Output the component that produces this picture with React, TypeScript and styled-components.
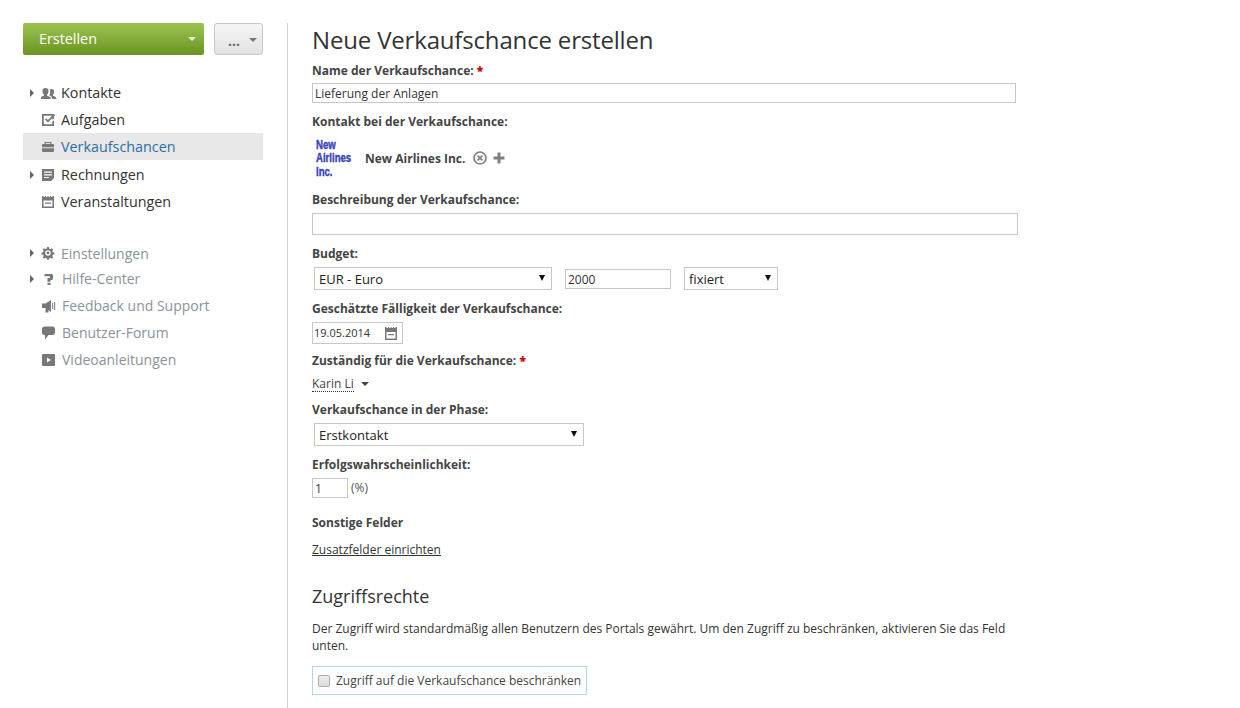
import React, { ReactNode } from "react"
import styled, { createGlobalStyle } from "styled-components"

const GlobalStyle = createGlobalStyle`
  html, body {
    margin: 0;
    padding: 0;
    background: #fff;
  }
  body {
    font-family: "Open Sans", "Liberation Sans", sans-serif;
    font-size: 12px;
    color: #333;
  }
`

const Page = styled.div`
  display: flex;
  width: 1240px;
  height: 708px;
  padding: 23px 0 0 23px;
  box-sizing: border-box;
  overflow: hidden;
`

const Sidebar = styled.aside`
  width: 240px;
  flex: none;
  margin-right: 24px;
`

const ButtonRow = styled.div`
  display: flex;
  gap: 10px;
  margin-bottom: 24px;
`

const CreateButton = styled.div`
  position: relative;
  width: 181px;
  height: 32px;
  box-sizing: border-box;
  padding-left: 16px;
  border-radius: 2px;
  background: linear-gradient(#9cc452, #6b9321);
  color: #fff;
  font-size: 14.35px;
  line-height: 31px;

  &::after {
    content: "";
    position: absolute;
    right: 8px;
    top: 14px;
    border: 4px solid transparent;
    border-top-color: #e8f2d4;
    border-bottom: 0;
  }
`

const MoreButton = styled.div`
  position: relative;
  width: 49px;
  height: 32px;
  box-sizing: border-box;
  padding-left: 13px;
  border: 1px solid #c8c8c8;
  border-radius: 3px;
  background: linear-gradient(#f6f6f6, #e2e2e2);
  color: #666;
  font-size: 14px;
  font-weight: 700;
  line-height: 33px;

  &::after {
    content: "";
    position: absolute;
    right: 5px;
    top: 14px;
    border: 4px solid transparent;
    border-top-color: #777;
    border-bottom: 0;
  }
`

const NavGroup = styled.nav<{ $mt?: number }>`
  margin-top: ${p => p.$mt ?? 0}px;
`

const NavItem = styled.div<{ $active?: boolean; $muted?: boolean; $h?: number; $gap?: number }>`
  position: relative;
  display: flex;
  align-items: center;
  height: ${p => p.$h ?? 27}px;
  margin-bottom: ${p => (p.$active ? 1 : 0)}px;
  padding-left: 18px;
  font-size: ${p => (p.$muted ? 14 : 14.35)}px;
  background: ${p => (p.$active ? "#e8e8e8" : "transparent")};
  color: ${p => (p.$active ? "#2b6ea6" : p.$muted ? "#8b929b" : "#333")};

  svg.nav-icon {
    flex: none;
    width: 16px;
    height: 16px;
    margin-right: ${p => p.$gap ?? 4}px;
    fill: #787878;
  }
`

const Caret = styled.span`
  position: absolute;
  left: 7px;
  top: 50%;
  margin-top: -4px;
  border: 4px solid transparent;
  border-left: 4px solid #666;
  border-right: 0;
`

const Divider = styled.div`
  width: 1px;
  height: 685px;
  flex: none;
  background: #d1d1d1;
`

const Main = styled.main`
  flex: none;
  width: 728px;
  padding-left: 24px;
`

const Title = styled.h1`
  margin: 0;
  height: 39px;
  font-size: 24px;
  font-weight: 400;
  letter-spacing: -0.17px;
  line-height: 34px;
  color: #333;
`

const Label = styled.div<{ $mt?: number }>`
  margin-top: ${p => p.$mt ?? 0}px;
  height: 18px;
  font-size: 12px;
  font-weight: 700;
  line-height: 18px;
  color: #444;

  b {
    color: #c00;
  }
`

const Box = styled.div<{ $w: number; $h: number; $mt?: number; $ml?: number }>`
  position: relative;
  width: ${p => p.$w}px;
  height: ${p => p.$h}px;
  margin-top: ${p => p.$mt ?? 0}px;
  margin-left: ${p => p.$ml ?? 0}px;
  box-sizing: border-box;
  flex: none;
  padding-left: 2px;
  border: 1px solid #c7c7c7;
  background: #fff;
  font-size: 12px;
  line-height: 20px;
  color: #333;
`

const Select = styled(Box)`
  padding-left: 4px;
  font-size: 13px;
  line-height: 22px;
  color: #222;

  &::after {
    content: "";
    position: absolute;
    right: 6px;
    top: 7px;
    border: 3.5px solid transparent;
    border-top: 6px solid #111;
    border-bottom: 0;
  }
`

const DateBox = styled(Box)`
  padding-left: 1px;
  font-size: 11px;
`

const ContactRow = styled.div`
  display: flex;
  align-items: center;
  height: 40px;
  margin-top: 7px;
  padding-left: 4px;
`

const Logo = styled.div`
  width: 36px;
  margin-right: 13px;
  transform: translateY(1px) scaleX(0.8);
  transform-origin: left center;
  white-space: nowrap;
  color: #3a44b8;
  font-family: "Liberation Sans", sans-serif;
  font-size: 12px;
  font-weight: 700;
  line-height: 13.5px;
  -webkit-text-stroke: 0.4px #3a44b8;
`

const ContactName = styled.span`
  font-size: 12px;
  font-weight: 700;
  color: #444;
`

const ContactIcon = styled.svg<{ $ml: number }>`
  width: 14px;
  height: 14px;
  margin-top: -1px;
  margin-left: ${p => p.$ml}px;
`

const FieldRow = styled.div`
  display: flex;
  align-items: center;
  height: 23px;
  margin-top: 4px;
  padding-left: 2px;
`

const DateIcon = styled.svg`
  position: absolute;
  right: 5px;
  top: 4px;
  width: 12px;
  height: 13px;
  fill: #787878;
`

const OwnerRow = styled.div`
  display: flex;
  align-items: center;
  height: 18px;
  margin-top: 5px;
`

const Owner = styled.span`
  border-bottom: 1px dotted #333;
  font-size: 12px;
  line-height: 15px;
  color: #444;
`

const OwnerCaret = styled.span`
  width: 0;
  margin-left: 7px;
  border: 4px solid transparent;
  border-top-color: #444;
  border-bottom: 0;
`

const PercentRow = styled.div`
  display: flex;
  margin-top: 4px;
`

const PercentText = styled.span`
  margin-left: 3px;
  line-height: 20px;
  font-size: 12px;
  color: #555;
`

const SetupLink = styled.a`
  display: block;
  width: max-content;
  margin-top: 9px;
  font-size: 12px;
  line-height: 18px;
  color: #333;
  text-decoration: underline;
`

const SectionTitle = styled.h2`
  margin: 24px 0 0;
  height: 26px;
  font-size: 18px;
  font-weight: 400;
  line-height: 26px;
  color: #333;
`

const Notice = styled.p`
  margin: 11px 0 0;
  width: 720px;
  font-size: 12px;
  line-height: 17px;
  color: #333;
`

const RestrictBox = styled.label`
  display: flex;
  align-items: center;
  width: 275px;
  height: 29px;
  margin-top: 12px;
  box-sizing: border-box;
  padding-left: 5px;
  border: 1px solid #b5d5e8;
  font-size: 12px;
  color: #444;
`

const CheckBox = styled.span`
  width: 12px;
  height: 12px;
  margin-right: 6px;
  box-sizing: border-box;
  border: 1px solid #adadad;
  border-radius: 2px;
  background: linear-gradient(#ececec, #dcdcdc);
`

const icons: Record<string, ReactNode> = {
  contacts: (
    <g transform="translate(-1 1)">
      <path d="M5.500 2a3 3 0 0 1 3 3.200c0 1.500-.6 2.800-1.400 3.400v1.200c2.200.6 3.900 1.400 3.900 3.200H0c0-1.800 1.700-2.600 3.900-3.200V8.600C3.100 8 2.500 6.700 2.500 5.200a3 3 0 0 1 3-3.200zM11.500 3a2.600 2.600 0 0 1 2.600 2.800c0 1.300-.5 2.400-1.200 2.900v1c1.500.4 3.600 1.100 3.600 3.300h-4.200c-.2-1.700-1.300-2.800-2.800-3.500V8.700C10.300 7.700 10.200 6.300 10.100 5c0-.6-.1-1.100-.4-1.500.5-.3 1.100-.5 1.800-.5z" />
    </g>
  ),
  tasks: (
    <>
      <path d="M1 2h12v4.200l-1.800 1.800V3.800H2.800v8.400h8.400V10L13 8.200V14H1z" />
      <path d="M4 7.500l1.300-1.300 1.700 1.700L12.800 2l1.300 1.300L7 10.500z" />
    </>
  ),
  cases: (
    <path fillRule="evenodd" d="M4.500 3h5a1 1 0 0 1 1 1v1H12a1 1 0 0 1 1 1v2.300H1V6a1 1 0 0 1 1-1h1.500V4a1 1 0 0 1 1-1zM4.800 4.100V5h4.400v-.9zM1 9.300h12V12a1 1 0 0 1-1 1H2a1 1 0 0 1-1-1z" />
  ),
  invoices: (
    <path fillRule="evenodd" d="M1 2h12v9l-3 3H1zM3 4.500v1.200h8V4.500zM3 7.200v1.200h8V7.200zM3 9.900v1.200h5V9.900z" />
  ),
  events: (
    <path fillRule="evenodd" d="M1 2h1.500v1h1.500V2h1v1h1.500V2h1v1H9V2h1v1h1.500V2H13v12H1zM2.500 6.500v6h9v-6zM4 8.500h6v1.200H4z" />
  ),
  settings: (
    <g transform="translate(-.4 .6) scale(.92)">
      <path fillRule="evenodd" d="M7 1.500h2l.4 1.800 1.300.5 1.600-1 1.400 1.400-1 1.600.5 1.300 1.800.4v2l-1.800.4-.5 1.300 1 1.600-1.400 1.400-1.600-1-1.300.5-.4 1.800H7l-.4-1.800-1.300-.5-1.600 1-1.400-1.400 1-1.600-.5-1.300-1.800-.4v-2l1.800-.4.5-1.300-1-1.600 1.400-1.400 1.600 1 1.300-.5zM8 5a3 3 0 1 0 0 6 3 3 0 0 0 0-6z" />
      <circle cx="8" cy="8" r="1.500" />
    </g>
  ),
  help: (
    <path d="M3.500 3h7.500l1 1v4l-1 1H9.500V10.700H6.500V7H9V5.200H3.500zM6.500 11.800h3V14h-3z" />
  ),
  feedback: (
    <path d="M1 5.500h3.500L10 2v12L7.500 12v2.500H4.500V10H1zM11.200 5h1v6h-1zM13.200 4h1v8h-1z" />
  ),
  forum: (
    <path d="M3.500 1.500h8c1.500 0 2.500 1 2.500 2.500v3.500c0 1.500-1 2.500-2.500 2.500H7.500L4 14.500V10h-.5C2 10 1 9 1 7.500V4c0-1.500 1-2.500 2.500-2.500z" />
  ),
  video: (
    <path fillRule="evenodd" d="M2 2h11a1 1 0 0 1 1 1v10a1 1 0 0 1-1 1H2a1 1 0 0 1-1-1V3a1 1 0 0 1 1-1zM6 5.500v5l4-2.500z" />
  ),
}

const NavIcon = ({ name }: { name: string }) => (
  <svg className="nav-icon" viewBox="0 0 16 16">
    {icons[name]}
  </svg>
)

const mainItems = [
  { name: "contacts", text: "Kontakte", caret: true },
  { name: "tasks", text: "Aufgaben" },
  { name: "cases", text: "Verkaufschancen", active: true },
  { name: "invoices", text: "Rechnungen", caret: true },
  { name: "events", text: "Veranstaltungen" },
]

const extraItems = [
  { name: "settings", text: "Einstellungen", caret: true, h: 24, gap: 4 },
  { name: "help", text: "Hilfe-Center", caret: true, h: 27, gap: 5 },
  { name: "feedback", text: "Feedback und Support", h: 27, gap: 5 },
  { name: "forum", text: "Benutzer-Forum", h: 27, gap: 5 },
  { name: "video", text: "Videoanleitungen", h: 27, gap: 5 },
]

const App = () => (
  <>
    <GlobalStyle />
    <Page>
      <Sidebar>
        <ButtonRow>
          <CreateButton>Erstellen</CreateButton>
          <MoreButton>...</MoreButton>
        </ButtonRow>
        <NavGroup>
          {mainItems.map(item => (
            <NavItem key={item.name} $active={item.active}>
              {item.caret && <Caret />}
              <NavIcon name={item.name} />
              {item.text}
            </NavItem>
          ))}
        </NavGroup>
        <NavGroup $mt={26}>
          {extraItems.map(item => (
            <NavItem key={item.name} $muted $h={item.h} $gap={item.gap}>
              {item.caret && <Caret />}
              <NavIcon name={item.name} />
              {item.text}
            </NavItem>
          ))}
        </NavGroup>
      </Sidebar>
      <Divider />
      <Main>
        <Title>Neue Verkaufschance erstellen</Title>
        <Label>
          Name der Verkaufschance: <b>*</b>
        </Label>
        <Box $w={704} $h={20} $mt={3}>
          Lieferung der Anlagen
        </Box>
        <Label $mt={10}>Kontakt bei der Verkaufschance:</Label>
        <ContactRow>
          <Logo>
            New
            <br />
            Airlines
            <br />
            Inc.
          </Logo>
          <ContactName>New Airlines Inc.</ContactName>
          <ContactIcon $ml={8} viewBox="0 0 14 14">
            <circle cx="7" cy="7" r="6" fill="none" stroke="#808080" strokeWidth="1.700" />
            <path d="M4.600 4.600l4.800 4.800M9.400 4.600l-4.800 4.800" stroke="#808080" strokeWidth="1.700" />
          </ContactIcon>
          <ContactIcon $ml={5} viewBox="0 0 14 14">
            <path d="M5.500 1.500h3v4h4v3h-4v4h-3v-4h-4v-3h4z" fill="#808080" />
          </ContactIcon>
        </ContactRow>
        <Label $mt={13}>Beschreibung der Verkaufschance:</Label>
        <Box $w={706} $h={22} $mt={4} />
        <Label $mt={10}>Budget:</Label>
        <FieldRow>
          <Select $w={238} $h={23}>EUR - Euro</Select>
          <Box $w={106} $h={20} $ml={13}>2000</Box>
          <Select $w={94} $h={23} $ml={13}>fixiert</Select>
        </FieldRow>
        <Label $mt={10}>Geschätzte Fälligkeit der Verkaufschance:</Label>
        <DateBox $w={91} $h={22} $mt={4}>
          19.05.2014
          <DateIcon viewBox="0 0 12 13">
            <path fillRule="evenodd" d="M0 0h1.500v1H3V0h1v1h1.500V0h1v1H8V0h1v1h1.500V0H12v13H0zM1.500 5v6.500h9V5zM3 7h6v1.200H3z" />
          </DateIcon>
        </DateBox>
        <Label $mt={8}>
          Zuständig für die Verkaufschance: <b>*</b>
        </Label>
        <OwnerRow>
          <Owner>Karin Li</Owner>
          <OwnerCaret />
        </OwnerRow>
        <Label $mt={8}>Verkaufschance in der Phase:</Label>
        <FieldRow>
          <Select $w={270} $h={23}>Erstkontakt</Select>
        </FieldRow>
        <Label $mt={10}>Erfolgswahrscheinlichkeit:</Label>
        <PercentRow>
          <Box $w={36} $h={20}>1</Box>
          <PercentText>(%)</PercentText>
        </PercentRow>
        <Label $mt={16}>Sonstige Felder</Label>
        <SetupLink>Zusatzfelder einrichten</SetupLink>
        <SectionTitle>Zugriffsrechte</SectionTitle>
        <Notice>
          Der Zugriff wird standardmäßig allen Benutzern des Portals gewährt. Um den Zugriff zu beschränken, aktivieren Sie das Feld unten.
        </Notice>
        <RestrictBox>
          <CheckBox />
          Zugriff auf die Verkaufschance beschränken
        </RestrictBox>
      </Main>
    </Page>
  </>
)

export default App
